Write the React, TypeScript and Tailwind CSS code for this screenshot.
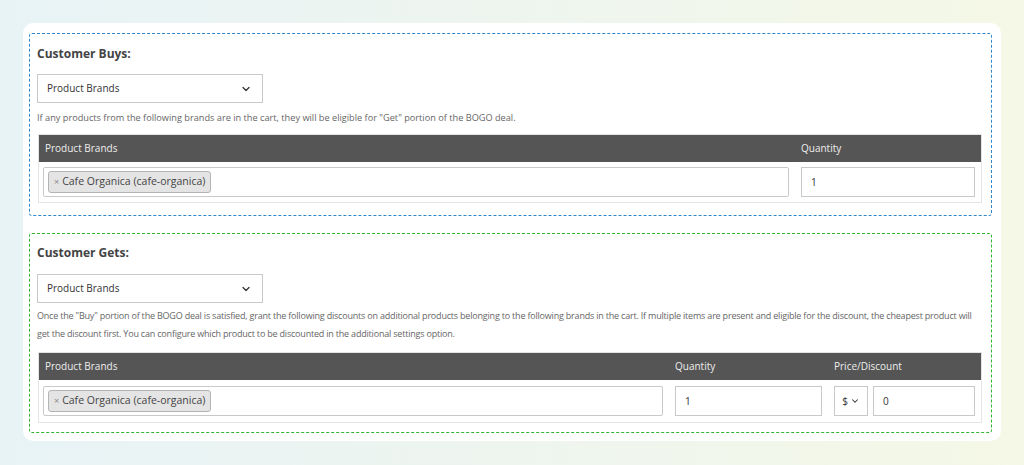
import { ChevronDown } from "lucide-react";

const font = { fontFamily: '"Open Sans", "Noto Sans", Arial, sans-serif' };

function Select({ label }: { label: string }) {
  return (
    <div className="flex items-center justify-between w-[226px] h-[29px] border border-[#c9c9c9] bg-white pl-[9px] pr-[10px] text-[10px] text-[#333]">
      <span>{label}</span>
      <ChevronDown size={12} strokeWidth={2.5} className="text-[#333]" />
    </div>
  );
}

function Chip() {
  return (
    <span className="inline-flex items-center h-[22px] px-[5px] bg-[#e4e4e4] border border-[#b4b4b4] rounded-[3px] text-[10.5px] text-[#444]">
      <span className="text-[#888] text-[9px] mr-[3px]">×</span>
      Cafe Organica (cafe-organica)
    </span>
  );
}

function Field({ value, className }: { value: string; className?: string }) {
  return (
    <div className={`flex items-center h-[30px] border border-[#c9c9c9] bg-white px-[9px] text-[10px] text-[#333] ${className ?? ""}`}>
      {value}
    </div>
  );
}

function BuysTable() {
  return (
    <div className="mx-[1px] border border-[#e4e4e4]">
      <div className="grid grid-cols-[756px_1fr] h-[27px] bg-[#555555] text-[10px] text-[#eeeeee] items-center">
        <div className="px-[6px]">Product Brands</div>
        <div className="px-[6px]">Quantity</div>
      </div>
      <div className="grid grid-cols-[756px_1fr] py-[5px] bg-white">
        <div className="pl-[4px] pr-[6px]">
          <div className="flex items-center h-[30px] border border-[#c9c9c9] rounded-[2px] px-[4px]">
            <Chip />
          </div>
        </div>
        <div className="px-[6px]">
          <Field value="1" />
        </div>
      </div>
    </div>
  );
}

function GetsTable() {
  return (
    <div className="mx-[1px] border border-[#e4e4e4]">
      <div className="grid grid-cols-[630px_159px_1fr] h-[27px] bg-[#555555] text-[10px] text-[#eeeeee] items-center">
        <div className="px-[6px]">Product Brands</div>
        <div className="px-[6px]">Quantity</div>
        <div className="px-[6px]">Price/Discount</div>
      </div>
      <div className="grid grid-cols-[630px_159px_1fr] py-[6px] bg-white">
        <div className="pl-[4px] pr-[6px]">
          <div className="flex items-center h-[30px] border border-[#c9c9c9] rounded-[2px] px-[4px]">
            <Chip />
          </div>
        </div>
        <div className="px-[6px]">
          <Field value="1" />
        </div>
        <div className="flex gap-[5px] pl-[6px] pr-[6px]">
          <div className="flex items-center justify-center gap-[2px] w-[34px] h-[30px] border border-[#c9c9c9] bg-white text-[10px] text-[#333]">
            <span>$</span>
            <ChevronDown size={10} strokeWidth={2.5} />
          </div>
          <Field value="0" className="flex-1" />
        </div>
      </div>
    </div>
  );
}

export default function App() {
  return (
    <div
      className="w-[1024px] h-[465px] bg-gradient-to-r from-[#e8f3f6] via-[#eef5ef] to-[#f5f8e6] pt-[23px] pl-[23px]"
      style={font}
    >
      <div className="w-[978px] h-[418px] bg-white rounded-[10px] pt-[10px] pl-[6px]">
        <div className="w-[963px] h-[183px] border-[1.5px] border-dashed border-[#2f86c8] rounded-[3px] pl-[7px] pr-[8px] pt-[12px]">
          <h2 className="text-[12px] leading-[16px] font-bold text-[#444]">Customer Buys:</h2>
          <div className="mt-[12px]">
            <Select label="Product Brands" />
          </div>
          <p className="mt-[6px] text-[9.2px] leading-[18px] text-[#666]">
            If any products from the following brands are in the cart, they will be eligible for "Get" portion of the BOGO deal.
          </p>
          <div className="mt-[7px]">
            <BuysTable />
          </div>
        </div>

        <div className="mt-[17px] w-[963px] h-[200px] border-[1.5px] border-dashed border-[#2fb52f] rounded-[3px] pl-[7px] pr-[8px] pt-[11px]">
          <h2 className="text-[12px] leading-[16px] font-bold text-[#444]">Customer Gets:</h2>
          <div className="mt-[13px]">
            <Select label="Product Brands" />
          </div>
          <p className="mt-[4px] text-[9px] tracking-[-0.2px] leading-[18px] text-[#666] whitespace-nowrap">
            Once the "Buy" portion of the BOGO deal is satisfied, grant the following discounts on additional products belonging to the following brands in the cart. If multiple items are present and eligible for the discount, the cheapest product will
            <br />
            get the discount first. You can configure which product to be discounted in the additional settings option.
          </p>
          <div className="mt-[9px]">
            <GetsTable />
          </div>
        </div>
      </div>
    </div>
  );
}
